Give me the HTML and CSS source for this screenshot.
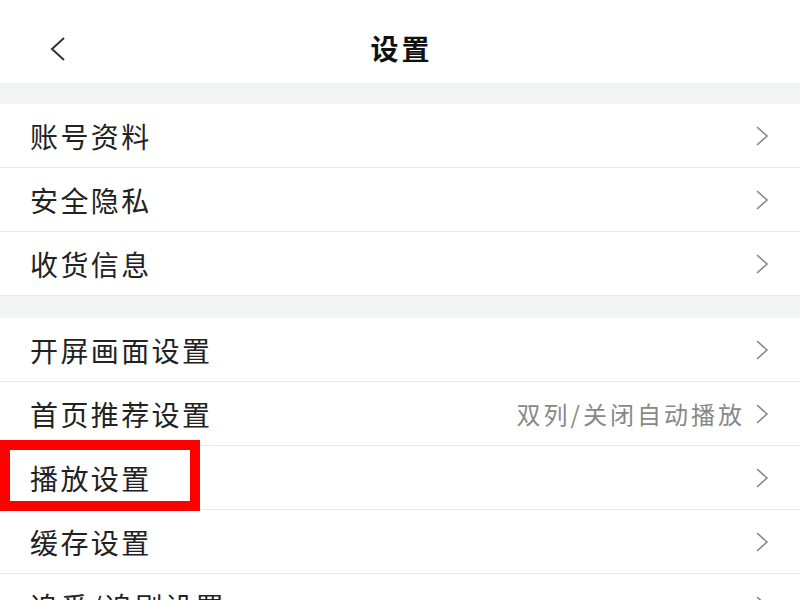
FILE: index.html
```html
<!doctype html>
<html lang="zh-CN">
  <head>
    <meta charset="UTF-8" />
    <meta name="viewport" content="width=device-width, initial-scale=1.0" />
    <title>设置</title>
    <link rel="stylesheet" href="styles.css">
  </head>
  <body>
    <div class="header">
      <svg class="back" width="18" height="26" viewBox="0 0 18 26">
        <polyline points="15,2 3,13 15,24" fill="none" stroke="#333" stroke-width="2" />
      </svg>
      <div class="title">设置</div>
    </div>

    <div class="gap"></div>
    <div class="group">
      <div class="row"><span class="label">账号资料</span><svg class="arrow" width="14" height="20" viewBox="0 0 14 20"><polyline points="2,1 12,10 2,19" /></svg></div>
      <div class="row"><span class="label">安全隐私</span><svg class="arrow" width="14" height="20" viewBox="0 0 14 20"><polyline points="2,1 12,10 2,19" /></svg></div>
      <div class="row"><span class="label">收货信息</span><svg class="arrow" width="14" height="20" viewBox="0 0 14 20"><polyline points="2,1 12,10 2,19" /></svg></div>
    </div>

    <div class="gap tall"></div>
    <div class="group">
      <div class="row"><span class="label">开屏画面设置</span><svg class="arrow" width="14" height="20" viewBox="0 0 14 20"><polyline points="2,1 12,10 2,19" /></svg></div>
      <div class="row"><span class="label">首页推荐设置</span><span class="value">双列/关闭自动播放</span><svg class="arrow" width="14" height="20" viewBox="0 0 14 20"><polyline points="2,1 12,10 2,19" /></svg></div>
      <div class="row marked"><span class="label">播放设置</span><svg class="arrow" width="14" height="20" viewBox="0 0 14 20"><polyline points="2,1 12,10 2,19" /></svg></div>
      <div class="row"><span class="label">缓存设置</span><svg class="arrow" width="14" height="20" viewBox="0 0 14 20"><polyline points="2,1 12,10 2,19" /></svg></div>
      <div class="row"><span class="label">追番/追剧设置</span><svg class="arrow" width="14" height="20" viewBox="0 0 14 20"><polyline points="2,1 12,10 2,19" /></svg></div>
    </div>
  </body>
</html>
```

FILE: styles.css
```css
body {
  margin: 0;
  background: #fff;
  font-family: "Noto Sans CJK SC", "Noto Sans", sans-serif;
  color: #222;
  overflow: hidden;
  height: 600px;
}
.header {
  height: 83px;
  display: flex;
  align-items: center;
  justify-content: center;
  position: relative;
}
.back {
  position: absolute;
  left: 49px;
  top: 36px;
}
.title {
  font-size: 28px;
  font-weight: bold;
  letter-spacing: 3px;
  margin-left: 3px;
  color: #111;
  padding-top: 12px;
}
.gap {
  height: 21px;
  background: #f2f3f5;
}
.gap.tall {
  height: 22px;
}
.row {
  height: 63px;
  border-bottom: 1px solid #e8e8e8;
  display: flex;
  align-items: center;
  padding: 0 31px 0 30px;
  position: relative;
}
.label {
  font-size: 28px;
  letter-spacing: 2.4px;
  flex: 1;
  white-space: nowrap;
}
.value {
  font-size: 24px;
  color: #888;
  letter-spacing: 3px;
  margin-right: 10px;
  white-space: nowrap;
}
.arrow {
  fill: none;
  stroke: #888;
  stroke-width: 1.6;
}
.marked::after {
  content: "";
  position: absolute;
  left: 0;
  top: -6px;
  width: 180px;
  height: 51px;
  border: 10px solid #f00;
}
```
